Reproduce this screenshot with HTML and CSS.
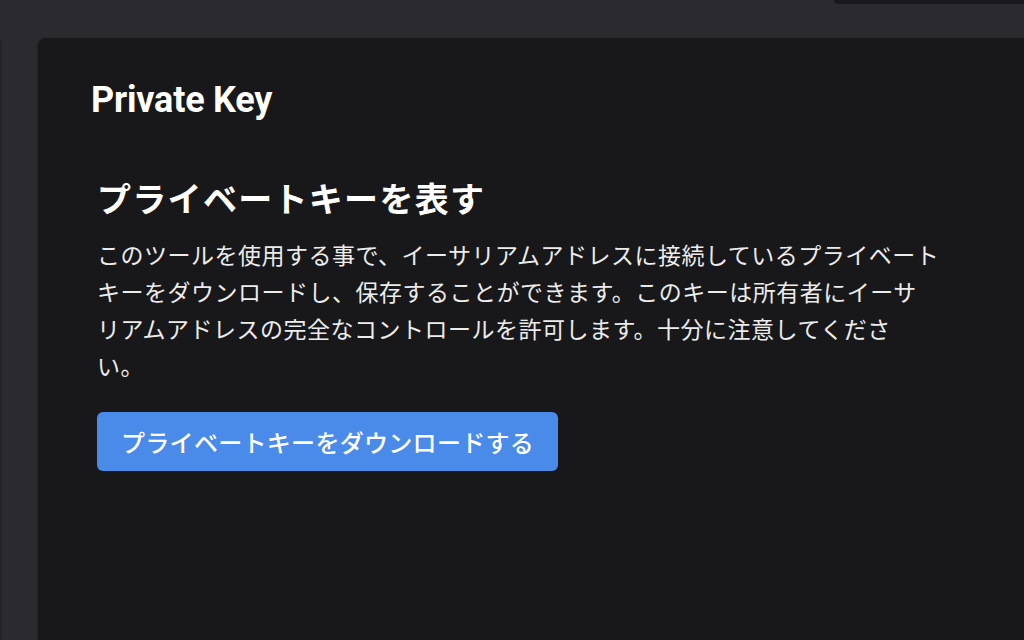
FILE: index.html
```html
<!DOCTYPE html>
<html lang="ja">
<head>
<meta charset="utf-8">
<title>Private Key</title>
<link rel="stylesheet" href="styles.css">
</head>
<body>
<div class="app">
  <header class="topbar">
    <div class="menu-tab"></div>
  </header>
  <div class="layout">
    <aside class="rail"></aside>
    <main class="card">
      <h1 class="page-title">Private Key</h1>
      <section class="reveal">
        <h2 class="reveal-title">プライベートキーを表す</h2>
        <p class="reveal-text">このツールを使用する事で、イーサリアムアドレスに接続しているプライベート<br>キーをダウンロードし、保存することができます。このキーは所有者にイーサ<br>リアムアドレスの完全なコントロールを許可します。十分に注意してくださ<br>い。</p>
        <button class="btn-primary" type="button">プライベートキーをダウンロードする</button>
      </section>
    </main>
  </div>
</div>
</body>
</html>
```
FILE: styles.css
```css
* { box-sizing: border-box; }
html, body { margin: 0; padding: 0; }
body {
  width: 1024px;
  height: 640px;
  overflow: hidden;
  background: #2b2a2f;
  font-family: Roboto, "Noto Sans CJK JP", sans-serif;
  color: #fff;
}
.app { display: flex; flex-direction: column; height: 640px; }
.topbar {
  height: 38px;
  display: flex;
  justify-content: flex-end;
  align-items: flex-start;
}
.menu-tab {
  width: 190px;
  height: 4px;
  background: #19181d;
  border-bottom-left-radius: 6px;
}
.layout { flex: 1; display: flex; min-height: 0; }
.rail {
  width: 38px;
  border-left: 2px solid #242328;
  margin-top: 2px;
}
.card {
  flex: 1;
  background: #18181a;
  border-top-left-radius: 8px;
  padding: 42px 53px 0;
  box-shadow: -1px 0 2px rgba(0,0,0,0.15);
}
.page-title {
  margin: 0;
  font-family: Roboto, sans-serif;
  font-weight: 700;
  font-size: 36px;
  line-height: 40px;
  letter-spacing: -0.2px;
}
.reveal { margin: 56px 0 0 6px; }
.reveal-title {
  margin: 0;
  font-family: "Noto Sans CJK JP", sans-serif;
  font-weight: 700;
  font-size: 34px;
  line-height: 44px;
  letter-spacing: 1.3px;
}
.reveal-text {
  margin: 16px 0 0;
  font-family: "Noto Sans CJK JP", sans-serif;
  font-weight: 400;
  font-size: 23px;
  line-height: 37px;
  letter-spacing: 0.5px;
  color: #ececec;
}
.btn-primary {
  margin-top: 28px;
  height: 59px;
  padding: 0 24px;
  border: 0;
  border-radius: 6px;
  background: #4a8ae8;
  color: #fff;
  font-family: "Noto Sans CJK JP", sans-serif;
  font-weight: 500;
  font-size: 24px;
  letter-spacing: 0.3px;
  cursor: pointer;
}
```
